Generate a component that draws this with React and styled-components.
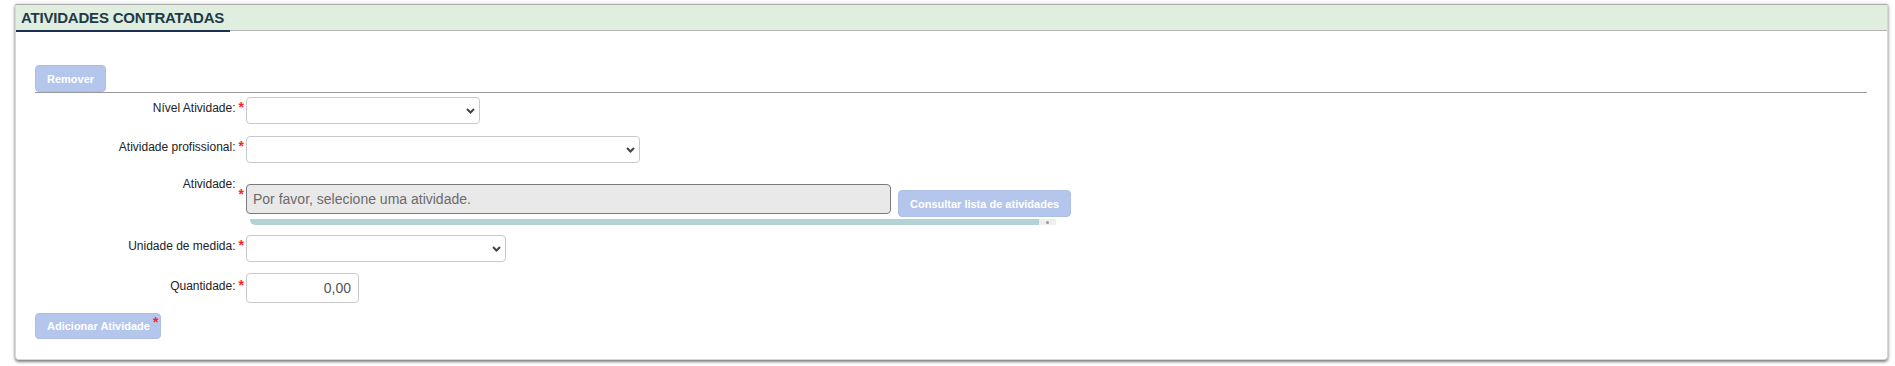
import React from 'react';
import styled, { createGlobalStyle } from 'styled-components';

const GlobalStyle = createGlobalStyle`
  html, body {
    margin: 0;
    padding: 0;
    background: #fff;
    font-family: "Liberation Sans", Arial, sans-serif;
  }
`;

const Page = styled.div`
  padding: 4px 7px 6px 15px;
`;

const Card = styled.section`
  background: #fff;
  border: 1px solid #d6d6d6;
  border-top-color: #ababab;
  border-radius: 0 0 4px 4px;
  box-shadow: 0 2px 3px rgba(0, 0, 0, 0.45), 0 0 4px rgba(0, 0, 0, 0.18);
`;

const Header = styled.div`
  height: 25px;
  background: #dfeedf;
  border-bottom: 1px solid #b4b4b4;
  display: flex;
  align-items: stretch;
`;

const Title = styled.h2`
  margin: 0 0 -1px;
  padding: 0 0 0 5px;
  width: 214px;
  display: flex;
  align-items: center;
  font-size: 15px;
  font-weight: 700;
  letter-spacing: -0.2px;
  color: #1e3a48;
  border-bottom: 2px solid #1b3050;
  box-sizing: border-box;
  height: 27px;
`;

const Body = styled.div`
  padding: 34px 20px 20px 19px;
`;

const Toolbar = styled.div`
  display: flex;
  border-bottom: 1px solid #9a9a9a;
`;

const Button = styled.button`
  display: inline-flex;
  align-items: center;
  vertical-align: top;
  height: ${({ $h }) => $h || 27}px;
  padding: ${({ $star }) => ($star ? '0 2px 0 11px' : '0 11px')};
  margin-top: ${({ $mt }) => $mt || 0}px;
  background: #b4c6ec;
  border: 1px solid #aebfe6;
  border-radius: 4px;
  color: #fff;
  font-family: "Liberation Sans", Arial, sans-serif;
  font-size: 11px;
  font-weight: 700;
  white-space: nowrap;
  cursor: default;
  box-sizing: border-box;
`;

const ButtonStar = styled.span`
  color: #ff1f1f;
  font-size: 14px;
  font-weight: 700;
  align-self: flex-start;
  margin-top: 1px;
  margin-left: 3px;
  line-height: 14px;
`;

const Footer = styled.div`
  display: flex;
`;

const Row = styled.div`
  display: grid;
  grid-template-columns: 211px 1fr;
  align-items: start;
  margin-top: ${({ $mt }) => $mt}px;
`;

const LabelCell = styled.div`
  display: flex;
  justify-content: flex-end;
  align-items: flex-start;
  gap: 3px;
  padding: ${({ $pt }) => ($pt === undefined ? 4 : $pt)}px 2px 0 0;
  font-size: 12px;
  line-height: 14px;
  color: #222;
`;

const Star = styled.span`
  color: #ff1f1f;
  font-size: 14px;
  font-weight: 700;
  line-height: 14px;
  margin-top: ${({ $drop }) => ($drop ? 10 : -1)}px;
`;

const SelectWrap = styled.div`
  position: relative;
  width: ${({ $w }) => $w}px;
  height: 27px;
`;

const Select = styled.select`
  appearance: none;
  display: block;
  width: 100%;
  height: 100%;
  background: #fff;
  border: 1px solid #c9c9c9;
  border-radius: 4px;
  font-family: inherit;
  font-size: 14px;
  box-sizing: border-box;
  outline: none;
`;

const Chevron = styled.svg`
  position: absolute;
  right: 5px;
  top: 11px;
  pointer-events: none;
`;

const Content = styled.div`
  padding-top: ${({ $pt }) => $pt || 0}px;
`;

const InputLine = styled.div`
  display: flex;
  align-items: flex-start;
  gap: 7px;
`;

const TextInput = styled.input`
  display: block;
  width: ${({ $w }) => $w}px;
  height: 30px;
  box-sizing: border-box;
  padding: 0 ${({ $right }) => ($right ? '7px 0 0' : '0 0 6px')};
  font-family: "Liberation Sans", Arial, sans-serif;
  font-size: 14px;
  text-align: ${({ $right }) => ($right ? 'right' : 'left')};
  color: ${({ $disabled }) => ($disabled ? '#6b6b6b' : '#555')};
  background: ${({ $disabled }) => ($disabled ? '#e9e9e9' : '#fff')};
  border: 1px solid ${({ $disabled }) => ($disabled ? '#7b7b7b' : '#c9c9c9')};
  border-radius: 4px;
  outline: none;
  &::placeholder {
    color: #6b6b6b;
  }
`;

const Progress = styled.div`
  display: flex;
  width: 806px;
  height: 6px;
  margin: 2px 0 0 4px;
`;

const ProgressFill = styled.div`
  flex: 1;
  background: #b2d2d6;
  border-radius: 0 0 0 5px;
`;

const ProgressEnd = styled.div`
  width: 17px;
  background: #eeeeee;
  display: flex;
  align-items: center;
  justify-content: center;
  &::after {
    content: '';
    width: 3px;
    height: 3px;
    border-radius: 50%;
    background: #9a9a9a;
  }
`;

const Dropdown = ({ width }) => (
  <SelectWrap $w={width}>
    <Select defaultValue="">
      <option value="" />
    </Select>
    <Chevron width="9" height="6" viewBox="0 0 9 6">
      <path d="M1 1l3.5 3.5L8 1" fill="none" stroke="#444" strokeWidth="2" />
    </Chevron>
  </SelectWrap>
);

const Label = ({ children, drop, pt }) => (
  <LabelCell $pt={pt}>
    <span>{children}</span>
    <Star $drop={drop}>*</Star>
  </LabelCell>
);

const App = () => (
  <Page>
    <GlobalStyle />
    <Card>
      <Header>
        <Title>ATIVIDADES CONTRATADAS</Title>
      </Header>
      <Body>
        <Toolbar>
          <Button>Remover</Button>
        </Toolbar>

        <Row $mt={4}>
          <Label>Nível Atividade:</Label>
          <Dropdown width={234} />
        </Row>

        <Row $mt={12}>
          <Label>Atividade profissional:</Label>
          <Dropdown width={394} />
        </Row>

        <Row $mt={14}>
          <Label pt={0} drop>
            Atividade:
          </Label>
          <Content $pt={7}>
            <InputLine>
              <TextInput
                $w={645}
                $disabled
                readOnly
                placeholder="Por favor, selecione uma atividade."
              />
              <Button $mt={6}>Consultar lista de atividades</Button>
            </InputLine>
            <Progress>
              <ProgressFill />
              <ProgressEnd />
            </Progress>
          </Content>
        </Row>

        <Row $mt={10}>
          <Label>Unidade de medida:</Label>
          <Dropdown width={260} />
        </Row>

        <Row $mt={11}>
          <Label pt={6}>Quantidade:</Label>
          <TextInput $w={113} $right readOnly value="0,00" />
        </Row>

        <Footer>
          <Button $mt={10} $h={26} $star>
            Adicionar Atividade
            <ButtonStar>*</ButtonStar>
          </Button>
        </Footer>
      </Body>
    </Card>
  </Page>
);

export default App;
